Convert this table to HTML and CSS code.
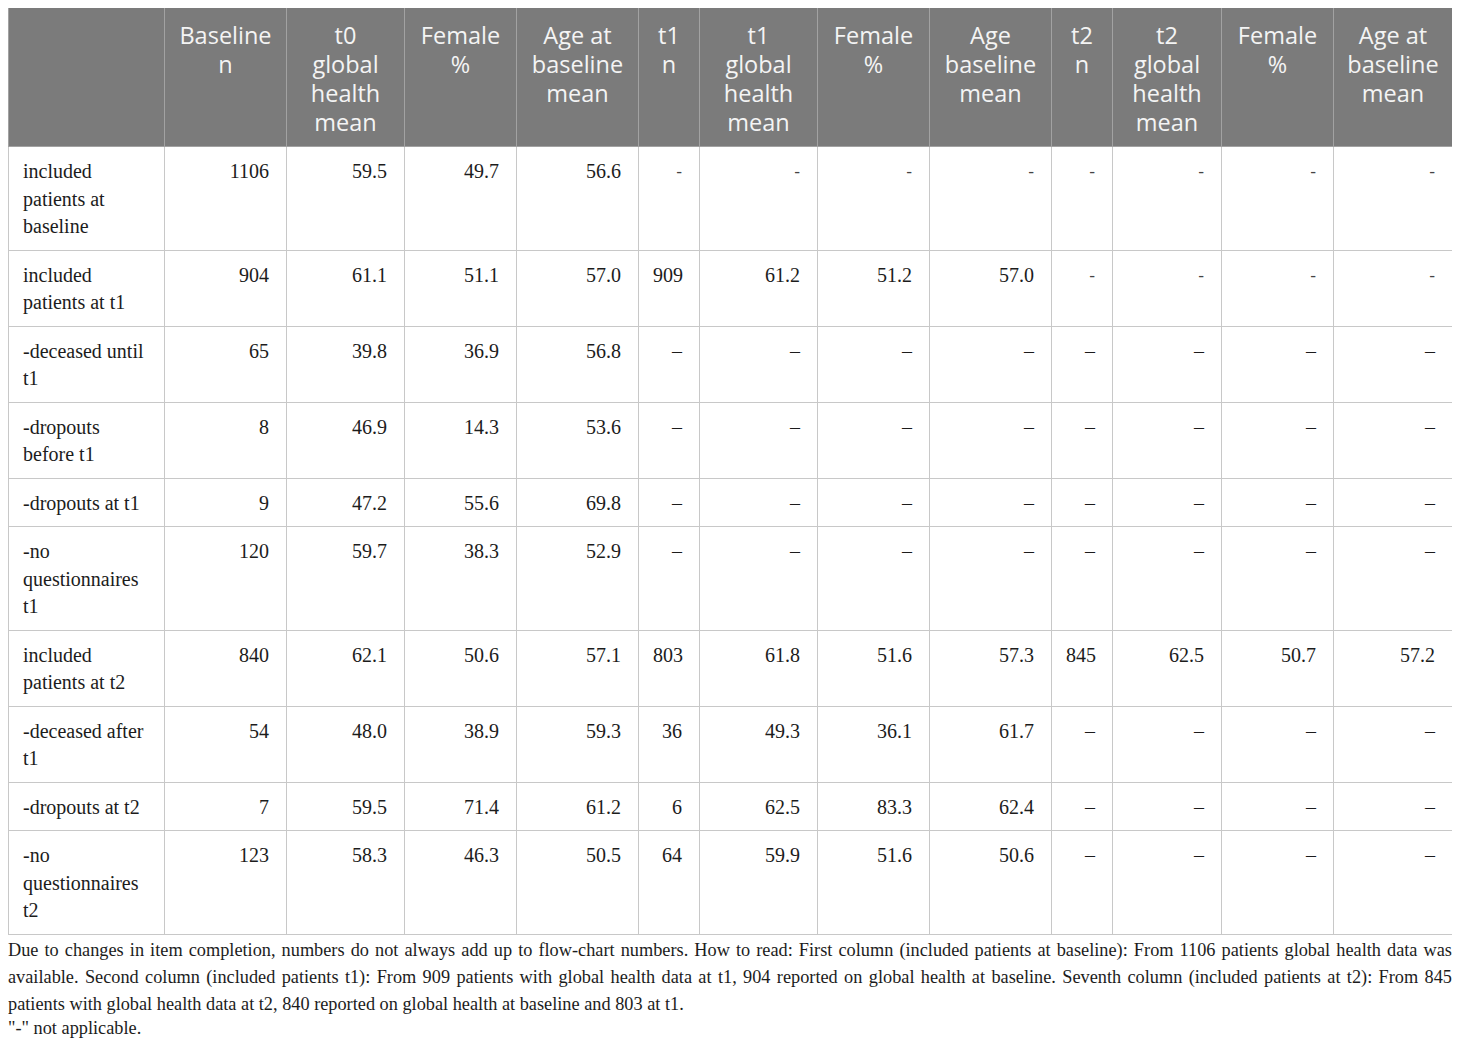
FILE: index.html
```html
<!DOCTYPE html>
<html lang="en">
<head>
  <meta charset="UTF-8">
  <title>Global health by follow-up</title>
  <link rel="stylesheet" href="styles.css">
</head>
<body>
  <table class="data">
    <colgroup>
      <col style="width:156px"><col style="width:122px"><col style="width:118px"><col style="width:112px">
      <col style="width:122px"><col style="width:61px"><col style="width:118px"><col style="width:112px">
      <col style="width:122px"><col style="width:61px"><col style="width:109px"><col style="width:112px">
      <col style="width:119px">
    </colgroup>
    <thead>
      <tr>
        <th></th>
        <th>Baseline<br>n</th>
        <th>t0<br>global<br>health<br>mean</th>
        <th>Female<br>%</th>
        <th>Age at<br>baseline<br>mean</th>
        <th>t1<br>n</th>
        <th>t1<br>global<br>health<br>mean</th>
        <th>Female<br>%</th>
        <th>Age<br>baseline<br>mean</th>
        <th>t2<br>n</th>
        <th>t2<br>global<br>health<br>mean</th>
        <th>Female<br>%</th>
        <th>Age at<br>baseline<br>mean</th>
      </tr>
    </thead>
    <tbody>
      <tr>
        <td>included patients at baseline</td>
        <td>1106</td><td>59.5</td><td>49.7</td><td>56.6</td>
        <td class="na">-</td><td class="na">-</td><td class="na">-</td><td class="na">-</td>
        <td class="na">-</td><td class="na">-</td><td class="na">-</td><td class="na">-</td>
      </tr>
      <tr>
        <td>included patients at t1</td>
        <td>904</td><td>61.1</td><td>51.1</td><td>57.0</td>
        <td>909</td><td>61.2</td><td>51.2</td><td>57.0</td>
        <td class="na">-</td><td class="na">-</td><td class="na">-</td><td class="na">-</td>
      </tr>
      <tr>
        <td>-deceased until t1</td>
        <td>65</td><td>39.8</td><td>36.9</td><td>56.8</td>
        <td>–</td><td>–</td><td>–</td><td>–</td><td>–</td><td>–</td><td>–</td><td>–</td>
      </tr>
      <tr>
        <td>-dropouts before t1</td>
        <td>8</td><td>46.9</td><td>14.3</td><td>53.6</td>
        <td>–</td><td>–</td><td>–</td><td>–</td><td>–</td><td>–</td><td>–</td><td>–</td>
      </tr>
      <tr>
        <td>-dropouts at t1</td>
        <td>9</td><td>47.2</td><td>55.6</td><td>69.8</td>
        <td>–</td><td>–</td><td>–</td><td>–</td><td>–</td><td>–</td><td>–</td><td>–</td>
      </tr>
      <tr>
        <td>-no questionnaires t1</td>
        <td>120</td><td>59.7</td><td>38.3</td><td>52.9</td>
        <td>–</td><td>–</td><td>–</td><td>–</td><td>–</td><td>–</td><td>–</td><td>–</td>
      </tr>
      <tr>
        <td>included patients at t2</td>
        <td>840</td><td>62.1</td><td>50.6</td><td>57.1</td>
        <td>803</td><td>61.8</td><td>51.6</td><td>57.3</td>
        <td>845</td><td>62.5</td><td>50.7</td><td>57.2</td>
      </tr>
      <tr>
        <td>-deceased after t1</td>
        <td>54</td><td>48.0</td><td>38.9</td><td>59.3</td>
        <td>36</td><td>49.3</td><td>36.1</td><td>61.7</td>
        <td>–</td><td>–</td><td>–</td><td>–</td>
      </tr>
      <tr>
        <td>-dropouts at t2</td>
        <td>7</td><td>59.5</td><td>71.4</td><td>61.2</td>
        <td>6</td><td>62.5</td><td>83.3</td><td>62.4</td>
        <td>–</td><td>–</td><td>–</td><td>–</td>
      </tr>
      <tr>
        <td>-no questionnaires t2</td>
        <td>123</td><td>58.3</td><td>46.3</td><td>50.5</td>
        <td>64</td><td>59.9</td><td>51.6</td><td>50.6</td>
        <td>–</td><td>–</td><td>–</td><td>–</td>
      </tr>
    </tbody>
  </table>

  <div class="notes">
    <p class="note">Due to changes in item completion, numbers do not always add up to flow-chart numbers. How to read: First column (included patients at baseline): From 1106 patients global health data was available. Second column (included patients t1): From 909 patients with global health data at t1, 904 reported on global health at baseline. Seventh column (included patients at t2): From 845 patients with global health data at t2, 840 reported on global health at baseline and 803 at t1.</p>
    <p class="note short">"-" not applicable.</p>
  </div>
</body>
</html>
```

FILE: styles.css
```css
body {
  margin: 8px;
  background-color: #fff;
  color: #1c1c1c;
  font-family: "Liberation Serif", "Times New Roman", serif;
}
.data {
  width: 1444px;
  border-collapse: collapse;
  table-layout: fixed;
  margin-top: -1px;
}
.data th {
  background-color: #7b7b7b;
  color: #f4f4f4;
  font-family: "Open Sans", "Noto Sans", sans-serif;
  font-weight: normal;
  font-size: 23.5px;
  line-height: 29px;
  text-align: center;
  vertical-align: top;
  padding: 13px 4px 9px;
  border: 1px solid #a2a2a2;
  border-top-color: #c8c8c8;
}
.data td {
  font-size: 20px;
  line-height: 27.5px;
  text-align: right;
  vertical-align: top;
  padding: 11px 17px 9px 14px;
  border: 1px solid #c8c8c8;
}
.data td:first-child {
  text-align: left;
}
.data td.na {
  font-family: "Open Sans", "Noto Sans", sans-serif;
  font-size: 18px;
  color: #444;
}
.notes {
  margin-top: 2px;
}
.note {
  margin: 0;
  font-size: 18.3px;
  line-height: 27px;
  text-align: justify;
}
.note.short {
  line-height: 20px;
}
```
